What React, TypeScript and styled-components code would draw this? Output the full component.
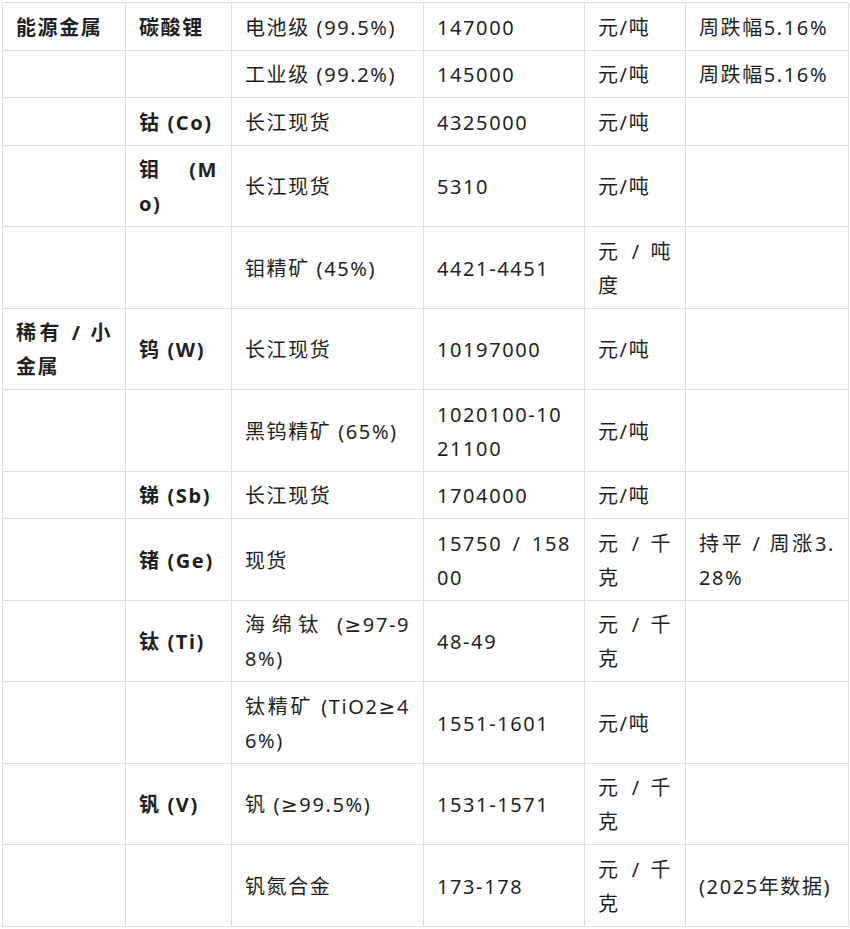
import React from "react";
import styled, { createGlobalStyle } from "styled-components";

const GlobalStyle = createGlobalStyle`
  html, body {
    margin: 0;
    padding: 0;
    background: #ffffff;
  }
  body {
    font-family: "Noto Sans", "DejaVu Sans", "Noto Sans CJK SC", sans-serif;
  }
`;

const Page = styled.div`
  padding: 2px 0 0 2px;
  width: 850px;
  box-sizing: border-box;
`;

const Table = styled.table`
  border-collapse: collapse;
  table-layout: fixed;
  width: 846px;
  font-family: "Noto Sans", "DejaVu Sans", "Noto Sans CJK SC", sans-serif;
  font-size: 20px;
  letter-spacing: 1.6px;
  line-height: 34px;
  color: #1f1f1f;
`;

const Cell = styled.td<{ $bold?: boolean }>`
  border: 1px solid #dddddd;
  padding: 7.75px 13px 4.75px;
  vertical-align: middle;
  text-align: justify;
  word-break: break-all;
  font-weight: ${(p) => (p.$bold ? 700 : 400)};
`;

type Row = {
  cat?: string;
  metal?: string;
  spec: string;
  price: string;
  unit: string;
  note?: string;
};

const rows: Row[] = [
  { cat: "能源金属", metal: "碳酸锂", spec: "电池级 (99.5%)", price: "147000", unit: "元/吨", note: "周跌幅5.16%" },
  { spec: "工业级 (99.2%)", price: "145000", unit: "元/吨", note: "周跌幅5.16%" },
  { metal: "钴 (Co)", spec: "长江现货", price: "4325000", unit: "元/吨" },
  { metal: "钼 (Mo)", spec: "长江现货", price: "5310", unit: "元/吨" },
  { spec: "钼精矿 (45%)", price: "4421-4451", unit: "元 / 吨度" },
  { cat: "稀有 / 小金属", metal: "钨 (W)", spec: "长江现货", price: "10197000", unit: "元/吨" },
  { spec: "黑钨精矿 (65%)", price: "1020100-1021100", unit: "元/吨" },
  { metal: "锑 (Sb)", spec: "长江现货", price: "1704000", unit: "元/吨" },
  { metal: "锗 (Ge)", spec: "现货", price: "15750 / 15800", unit: "元 / 千克", note: "持平 / 周涨3.28%" },
  { metal: "钛 (Ti)", spec: "海绵钛 (≥97-98%)", price: "48-49", unit: "元 / 千克" },
  { spec: "钛精矿 (TiO2≥46%)", price: "1551-1601", unit: "元/吨" },
  { metal: "钒 (V)", spec: "钒 (≥99.5%)", price: "1531-1571", unit: "元 / 千克" },
  { spec: "钒氮合金", price: "173-178", unit: "元 / 千克", note: "(2025年数据)" },
];

const widths = [123, 106, 192, 161, 101, 163];

export default function App() {
  return (
    <>
      <GlobalStyle />
      <Page>
        <Table>
          <colgroup>
            {widths.map((w, i) => (
              <col key={i} style={{ width: `${w}px` }} />
            ))}
          </colgroup>
          <tbody>
            {rows.map((r, i) => (
              <tr key={i}>
                <Cell $bold>{r.cat ?? ""}</Cell>
                <Cell $bold>{r.metal ?? ""}</Cell>
                <Cell>{r.spec}</Cell>
                <Cell>{r.price}</Cell>
                <Cell>{r.unit}</Cell>
                <Cell>{r.note ?? ""}</Cell>
              </tr>
            ))}
          </tbody>
        </Table>
      </Page>
    </>
  );
}
